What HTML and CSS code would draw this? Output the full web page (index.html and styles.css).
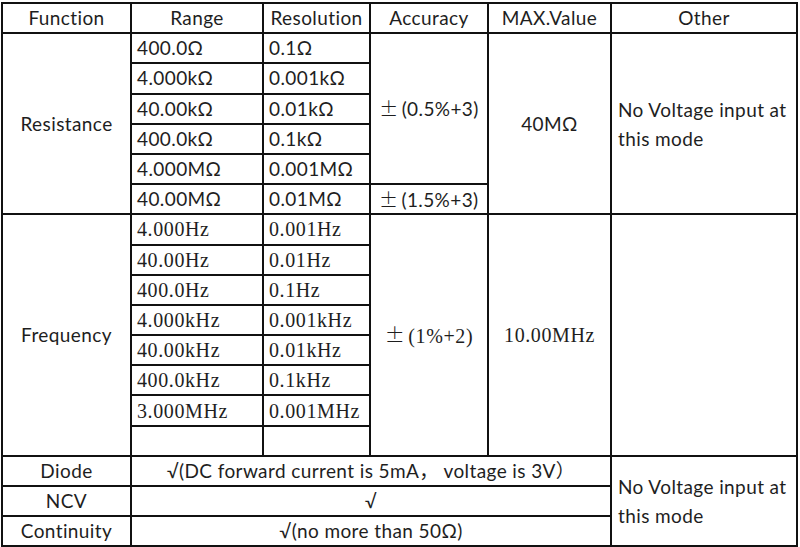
FILE: index.html
```html
<!DOCTYPE html>
<html>
<head>
<meta charset="utf-8">
<link rel="stylesheet" href="styles.css">
</head>
<body>
<table class="spec">
  <colgroup>
    <col class="c-func"><col class="c-range"><col class="c-res"><col class="c-acc"><col class="c-max"><col class="c-other">
  </colgroup>
  <tr class="head">
    <td class="ctr">Function</td>
    <td class="ctr">Range</td>
    <td class="ctr">Resolution</td>
    <td class="ctr">Accuracy</td>
    <td class="ctr">MAX.Value</td>
    <td class="ctr">Other</td>
  </tr>
  <tr>
    <td class="ctr" rowspan="6">Resistance</td>
    <td>400.0Ω</td><td>0.1Ω</td>
    <td class="ctr" rowspan="5"><span class="pm">±</span>(0.5%+3)</td>
    <td class="ctr" rowspan="6">40MΩ</td>
    <td class="other" rowspan="6">No Voltage input at<br>this mode</td>
  </tr>
  <tr><td>4.000kΩ</td><td>0.001kΩ</td></tr>
  <tr><td>40.00kΩ</td><td>0.01kΩ</td></tr>
  <tr><td>400.0kΩ</td><td>0.1kΩ</td></tr>
  <tr><td>4.000MΩ</td><td>0.001MΩ</td></tr>
  <tr><td>40.00MΩ</td><td>0.01MΩ</td><td class="acc-l"><span class="pm">±</span>(1.5%+3)</td></tr>
  <tr class="freq">
    <td class="ctr sans" rowspan="8">Frequency</td>
    <td>4.000Hz</td><td>0.001Hz</td>
    <td class="ctr" rowspan="8"><span class="pm">±</span>(1%+2)</td>
    <td class="ctr" rowspan="8">10.00MHz</td>
    <td rowspan="8"></td>
  </tr>
  <tr class="freq"><td>40.00Hz</td><td>0.01Hz</td></tr>
  <tr class="freq"><td>400.0Hz</td><td>0.1Hz</td></tr>
  <tr class="freq"><td>4.000kHz</td><td>0.001kHz</td></tr>
  <tr class="freq"><td>40.00kHz</td><td>0.01kHz</td></tr>
  <tr class="freq"><td>400.0kHz</td><td>0.1kHz</td></tr>
  <tr class="freq"><td>3.000MHz</td><td>0.001MHz</td></tr>
  <tr class="freq"><td></td><td></td></tr>
  <tr>
    <td class="ctr">Diode</td>
    <td class="ctr" colspan="4">√(DC forward current is 5mA， voltage is 3V）</td>
    <td class="other" rowspan="3">No Voltage input at<br>this mode</td>
  </tr>
  <tr><td class="ctr">NCV</td><td class="ctr" colspan="4">√</td></tr>
  <tr><td class="ctr">Continuity</td><td class="ctr" colspan="4">√(no more than 50Ω)</td></tr>
</table>
</body>
</html>
```

FILE: styles.css
```css
html, body {
  margin: 0;
  padding: 0;
  background: #ffffff;
}
body {
  padding: 2px 0 0 1px;
}
.spec {
  border-collapse: collapse;
  table-layout: fixed;
  width: 795px;
  font-family: "Lato", "Noto Sans CJK SC", sans-serif;
  font-size: 19px;
  letter-spacing: 0.4px;
  color: #1e1e1e;
  border: 2px solid #111;
}
.c-func { width: 129px; }
.c-range { width: 132px; }
.c-res { width: 107px; }
.c-acc { width: 118px; }
.c-max { width: 123px; }
.c-other { width: 186px; }
.spec td {
  border: 2px solid #111;
  height: 28.2px;
  padding: 0 5px;
  text-align: left;
  vertical-align: middle;
  white-space: nowrap;
  line-height: 26px;
}
.spec td.ctr {
  text-align: center;
}
.spec td.other {
  line-height: 29px;
  padding-left: 6px;
}
.spec td.acc-l {
  padding-left: 8px;
}
.pm {
  font-family: "Noto Sans CJK SC", sans-serif;
  font-weight: 300;
  margin-right: 3px;
}
.freq td {
  font-family: "Liberation Serif", serif;
  font-size: 20px;
  letter-spacing: 0.6px;
}
.freq td.sans {
  font-family: "Lato", sans-serif;
  font-size: 19px;
  letter-spacing: 0.4px;
}
```
